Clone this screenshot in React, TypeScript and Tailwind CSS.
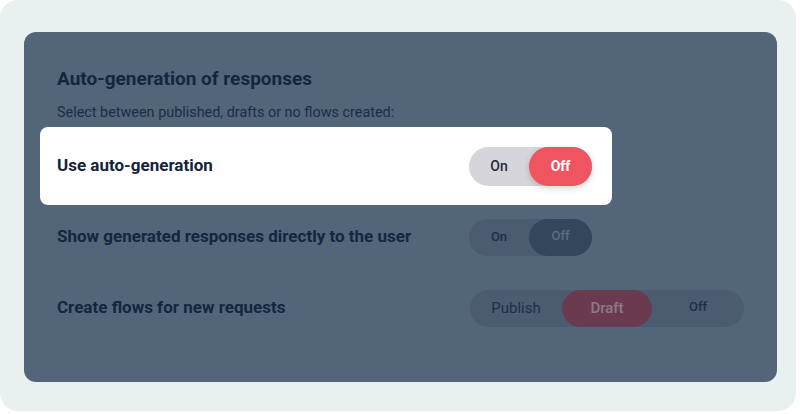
import React from "react";

export default function App() {
  return (
    <div className="w-[800px] h-[414px] bg-white" style={{ fontFamily: "Roboto, 'Noto Sans', sans-serif" }}>
      <div className="w-[796px] h-[411px] rounded-[18px] bg-[#e8f1f0] pt-[32px] pl-[24px]">
        <div className="w-[753px] h-[350px] rounded-[12px] bg-[#536579] pt-[34px] px-[16px]">
          <h1 className="pl-[17px] text-[19px] leading-[26px] font-bold text-[#13263f]">Auto-generation of responses</h1>
          <p className="pl-[17px] mt-[11px] text-[14.4px] leading-[20px] text-[#1b2d44]">
            Select between published, drafts or no flows created:
          </p>

          <div className="mt-[4px] w-[572px] h-[78px] rounded-[8px] bg-white flex items-center pl-[17px] pr-[20px]">
            <div className="w-[412px] text-[17px] font-bold text-[#13243a]">Use auto-generation</div>
            <div className="flex w-[123px] h-[39px] rounded-full bg-[#d6d6da]">
              <div className="w-[60px] flex items-center justify-center text-[14px] font-medium text-[#1c2a3e]">On</div>
              <div className="flex-1 flex items-center justify-center rounded-full bg-[#ef5461] text-[14px] font-bold text-white shadow-[0_2px_6px_rgba(0,0,0,0.18)]">
                Off
              </div>
            </div>
          </div>

          <div className="h-[64px] flex items-center pl-[17px]">
            <div className="w-[412px] text-[17px] font-bold text-[#13263f]">Show generated responses directly to the user</div>
            <div className="flex w-[123px] h-[37px] rounded-full bg-[#4b5c70]">
              <div className="w-[60px] flex items-center justify-center text-[13px] font-medium text-[#1c2e47]">On</div>
              <div className="flex-1 flex items-center justify-center rounded-full bg-[#34465c] text-[13px] font-medium text-[#5b6c81] pb-[3px]">
                Off
              </div>
            </div>
          </div>

          <div className="h-[78px] flex items-center pl-[17px]">
            <div className="w-[413px] text-[17px] font-bold text-[#13263f]">Create flows for new requests</div>
            <div className="flex w-[274px] h-[37px] rounded-full bg-[#4b5c70]">
              <div className="w-[92px] flex items-center justify-center text-[15px] text-[#1d3049]">Publish</div>
              <div className="w-[90px] flex items-center justify-center rounded-full bg-[#6a3b4f] text-[15px] font-medium text-[#8d7a89]">
                Draft
              </div>
              <div className="flex-1 flex items-center justify-center text-[13px] font-medium text-[#1d3049] pb-[3px]">Off</div>
            </div>
          </div>
        </div>
      </div>
    </div>
  );
}
